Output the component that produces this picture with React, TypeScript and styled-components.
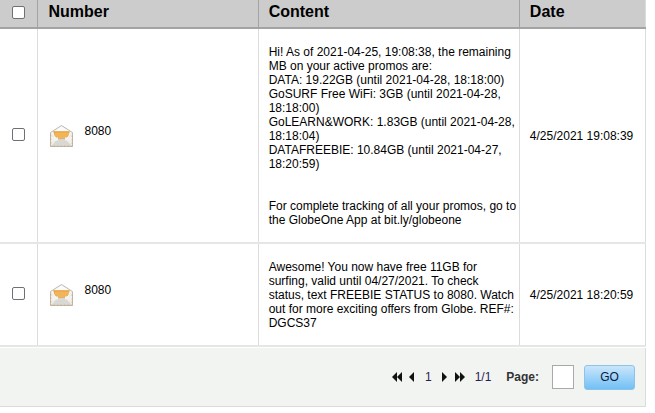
import styled, {createGlobalStyle} from "styled-components";

const GlobalStyle = createGlobalStyle`
    html, body {
        margin: 0;
        padding: 0;
        background: #fff;
    }
    body {
        font-family: "Liberation Sans", Arial, sans-serif;
        color: #000;
    }
`

type MessageType = {
    number: string
    date: string
    lines: string[]
}

const messages: MessageType[] = [
    {
        number: "8080",
        date: "4/25/2021 19:08:39",
        lines: [
            "Hi! As of 2021-04-25, 19:08:38, the remaining",
            "MB on your active promos are:",
            "DATA: 19.22GB (until 2021-04-28, 18:18:00)",
            "GoSURF Free WiFi: 3GB (until 2021-04-28,",
            "18:18:00)",
            "GoLEARN&WORK: 1.83GB (until 2021-04-28,",
            "18:18:04)",
            "DATAFREEBIE: 10.84GB (until 2021-04-27,",
            "18:20:59)",
            "",
            "",
            "For complete tracking of all your promos, go to",
            "the GlobeOne App at bit.ly/globeone",
        ],
    },
    {
        number: "8080",
        date: "4/25/2021 18:20:59",
        lines: [
            "Awesome! You now have free 11GB for",
            "surfing, valid until 04/27/2021. To check",
            "status, text FREEBIE STATUS to 8080. Watch",
            "out for more exciting offers from Globe. REF#:",
            "DGCS37",
        ],
    },
]

const MailIcon = () => (
    <svg width="23" height="22" viewBox="0 0 23 22">
        <path d="M.5 7.5 11.5.5l11 7V21.5H.5Z" fill="#efeeea" stroke="#bdb9b0" strokeWidth="1"/>
        <path d="M2 7.5 11.5 1.5 21 7.5 18 13H5Z" fill="#fbfbf9"/>
        <path d="M3.5 6.5H19.5L18 11 15.5 13.5H7.5L5 11Z" fill="#eea235" stroke="#d08a2e" strokeWidth="0.4"/>
        <path d="M6 7.5V11.5M8 7.5V13M10 7.5V13M12 7.5V13M14 7.5V13M16 7.5V13M18 7.5V11" stroke="#f8d08a" strokeWidth="0.8"/>
        <path d="M1.5 21 8 14H15L21.5 21Z" fill="#d9d8d3" strokeDasharray="1 1" stroke="#c4c3be" strokeWidth="0.5"/>
        <path d="M1 14 8 14M22 14 15 14" stroke="#f4f3ef" strokeWidth="3"/>
        <path d="M.8 10V21.3H22.2V10" fill="none" stroke="#d3a06c" strokeWidth="0.8" strokeDasharray="1.5 2"/>
    </svg>
)

const App = () => {
    return (
        <Page>
            <GlobalStyle/>
            <Table>
                <thead>
                    <tr>
                        <HeadCheckCell><CheckBox type="checkbox"/></HeadCheckCell>
                        <NumberHead>Number</NumberHead>
                        <ContentHead>Content</ContentHead>
                        <DateHead>Date</DateHead>
                    </tr>
                </thead>
                <tbody>
                    {messages.map((m) => (
                        <tr key={m.date}>
                            <CheckCell><RowCheckBox type="checkbox"/></CheckCell>
                            <Cell>
                                <NumberWrap>
                                    <MailIcon/>
                                    <NumberText>{m.number}</NumberText>
                                </NumberWrap>
                            </Cell>
                            <ContentCell>
                                {m.lines.map((line, i) => (
                                    <Line key={i}>{line}</Line>
                                ))}
                            </ContentCell>
                            <DateCell>{m.date}</DateCell>
                        </tr>
                    ))}
                </tbody>
            </Table>
            <Footer>
                <Pager>
                    <FirstGroup>
                        <Arrow $left/><Arrow $left/>
                    </FirstGroup>
                    <Arrow $left/>
                    <PageNum>1</PageNum>
                    <Arrow/>
                    <LastGroup>
                        <Arrow/><Arrow/>
                    </LastGroup>
                    <PageCount>1/1</PageCount>
                    <PageLabel>Page:</PageLabel>
                    <PageInput type="text"/>
                    <GoButton>GO</GoButton>
                </Pager>
            </Footer>
        </Page>
    )
}

export default App

const Page = styled.div`
    width: 646px;
    height: 413px;
    overflow: hidden;
`

const Table = styled.table`
    width: 646px;
    border-collapse: collapse;
    table-layout: fixed;
    font-size: 12px;
`

const HeadCell = styled.th`
    height: 28px;
    box-sizing: border-box;
    padding: 0 0 3px 10px;
    background-color: #cccccc;
    border-left: 1px solid #a3a3a3;
    border-bottom: 2px solid #a3a3a3;
    text-align: left;
    font-size: 16px;
    font-weight: bold;
    line-height: 18px;
`

const NumberHead = styled(HeadCell)`
    width: 221px;
    padding-left: 11px;
`

const ContentHead = styled(HeadCell)`
    width: 261px;
`

const DateHead = styled(HeadCell)`
    width: 126px;
    border-right: 1px solid #dcdcdc;
`

const HeadCheckCell = styled.th`
    width: 37px;
    height: 28px;
    box-sizing: border-box;
    padding: 0 0 3px;
    background-color: #cccccc;
    border-bottom: 2px solid #a3a3a3;
    text-align: center;
`

const Cell = styled.td`
    padding: 16px 10px 15px;
    border-left: 1px solid #dcdcdc;
    border-bottom: 2px solid #e6e6e6;
    vertical-align: middle;
`

const CheckCell = styled.td`
    padding: 0;
    border-bottom: 2px solid #e6e6e6;
    text-align: center;
    vertical-align: middle;
`

const ContentCell = styled(Cell)`
    line-height: 14px;
`

const DateCell = styled(Cell)`
    border-right: 1px solid #dcdcdc;
    white-space: nowrap;
`

const Line = styled.div`
    min-height: 14px;
    white-space: nowrap;
`

const CheckBox = styled.input`
    appearance: none;
    display: block;
    width: 13px;
    height: 13px;
    margin: 0 auto;
    box-sizing: border-box;
    background: #fff;
    border: 1px solid #6f6f77;
    border-radius: 2px;
`

const RowCheckBox = styled(CheckBox)`
    margin-top: -3px;
`

const NumberWrap = styled.div`
    display: flex;
    align-items: center;
    gap: 12px;
    padding-left: 2px;
`

const NumberText = styled.span`
    margin-bottom: 11px;
    line-height: 14px;
`

const Footer = styled.div`
    height: 59px;
    box-sizing: border-box;
    margin-top: 1px;
    display: flex;
    align-items: center;
    justify-content: flex-end;
    padding: 0 10px 0 0;
    background-color: #f2f4f2;
    border-bottom: 1px solid #dcdcdc;
    border-right: 1px solid #dcdcdc;
`

const Pager = styled.div`
    display: flex;
    align-items: center;
    font-size: 12px;
`

const FirstGroup = styled.span`
    display: inline-flex;
    margin-right: 7px;
`

const LastGroup = styled.span`
    display: inline-flex;
    margin-left: 8px;
`

const Arrow = styled.span<{ $left?: boolean }>`
    width: 0;
    height: 0;
    border-top: 5px solid transparent;
    border-bottom: 5px solid transparent;
    ${props => props.$left
        ? "border-right: 5.5px solid #111;"
        : "border-left: 5.5px solid #111;"}
`

const PageNum = styled.span`
    margin: 0 10px 0 11px;
    color: #2b1d52;
`

const PageCount = styled.span`
    margin-left: 10px;
    color: #2b1d52;
`

const PageLabel = styled.span`
    margin-left: 15px;
    font-weight: bold;
    color: #333;
`

const PageInput = styled.input`
    width: 22px;
    height: 24px;
    box-sizing: border-box;
    margin-left: 13px;
    padding: 0;
    background: #fff;
    border: 1px solid #a9a9a9;
`

const GoButton = styled.button`
    width: 51px;
    height: 25px;
    margin-left: 10px;
    padding: 0;
    font-family: "Liberation Sans", Arial, sans-serif;
    font-size: 12px;
    color: #0a1a3a;
    background: linear-gradient(#c9e6fb, #72c0f5);
    border: 1px solid #8ec3e8;
    border-radius: 3px;
`
